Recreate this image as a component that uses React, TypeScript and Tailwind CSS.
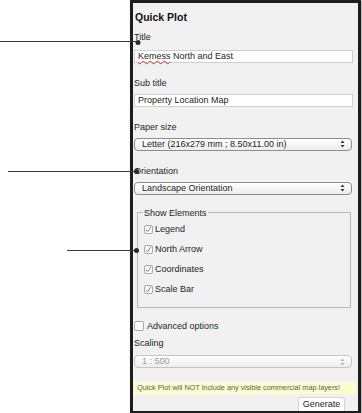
import React from "react";

const font = { fontFamily: '"Liberation Sans", Arial, sans-serif' };

const Check = ({ checked }: { checked: boolean }) => (
  <span className="flex h-[9px] w-[9px] items-center justify-center rounded-[2px] border border-[#a9a9a9] bg-white shadow-[inset_0_1px_1px_rgba(0,0,0,0.08)]">
    {checked && (
      <svg width="7" height="7" viewBox="0 0 7 7">
        <path d="M1 3.8 L2.6 5.6 L6 1" fill="none" stroke="#6b6b6b" strokeWidth="0.9" />
      </svg>
    )}
  </span>
);

const Arrows = ({ muted }: { muted?: boolean }) => (
  <svg width="5" height="8" viewBox="0 0 5 8" className="mr-[6px]">
    <path d="M2.5 0.5 L4.5 3 H0.5 Z M2.5 7.5 L4.5 5 H0.5 Z" fill={muted ? "#b0b0b0" : "#333"} />
  </svg>
);

const Select = ({ value, disabled }: { value: string; disabled?: boolean }) => (
  <div
    className={`flex h-[13px] items-center justify-between rounded-[4px] border bg-gradient-to-b from-white to-[#ededed] pl-[7px] text-[9px] leading-none mr-[4px] ${
      disabled ? "border-[#c4c4c4] text-[#9a9a9a]" : "border-[#8d8d8d] text-[#1e1e1e]"
    }`}
  >
    <span>{value}</span>
    <Arrows muted={disabled} />
  </div>
);

const Label = ({ children, mt }: { children: React.ReactNode; mt: string }) => (
  <div className={`${mt} h-[10px] text-[9px] leading-[10px] text-[#1e1e1e]`}>{children}</div>
);

const items = ["Legend", "North Arrow", "Coordinates", "Scale Bar"];

export default function App() {
  return (
    <div className="relative h-[413px] w-[362px] overflow-hidden bg-white" style={font}>
      <div className="ml-[130px] flex h-[413px] w-[231px] flex-col border-x-[3px] border-t-[3px] border-b-[2px] border-[#1d1d1d] bg-[#f1f1f1] pl-[1px] pr-[2px] shadow-[1px_1px_2px_rgba(0,0,0,0.4)]">
        <div className="mt-[8px] h-[12px] pl-[1px] text-[10.5px] font-bold leading-[12px] text-[#111]">Quick Plot</div>

        <Label mt="mt-[9px]">Title</Label>
        <div className="mt-[8px] mr-[3px] flex h-[13px] items-center border border-[#cfcfcf] bg-white pl-[3px] text-[9px] leading-none text-[#1e1e1e]">
          <span className="underline decoration-wavy decoration-[#d43a3a] decoration-[0.5px] underline-offset-[1px]">Kemess</span>
          <span>&nbsp;North and East</span>
        </div>

        <Label mt="mt-[15px]">Sub title</Label>
        <div className="mt-[6px] mr-[3px] flex h-[13px] items-center border border-[#cfcfcf] bg-white pl-[3px] text-[9px] leading-none text-[#1e1e1e]">
          Property Location Map
        </div>

        <Label mt="mt-[15px]">Paper size</Label>
        <div className="mt-[6px]">
          <Select value="Letter (216x279 mm ; 8.50x11.00 in)" />
        </div>

        <Label mt="mt-[15px]">Orientation</Label>
        <div className="mt-[6px]">
          <Select value="Landscape Orientation" />
        </div>

        <fieldset className="mt-[13px] ml-[3px] mr-[5px] h-[102px] border border-[#b9b9b9] pl-[6px]">
          <legend className="ml-[-1px] px-[1px] text-[9px] leading-[10px] text-[#1e1e1e]">Show Elements</legend>
          <div className="mt-[7px] flex flex-col gap-[10px]">
            {items.map((t) => (
              <div key={t} className="flex h-[10px] items-center gap-[2px] text-[9px] leading-none text-[#1e1e1e]">
                <Check checked />
                <span>{t}</span>
              </div>
            ))}
          </div>
        </fieldset>

        <div className="mt-[13px] flex h-[12px] items-center gap-[3px] text-[9px] leading-none text-[#1e1e1e]">
          <span className="h-[10px] w-[10px] rounded-[2px] border border-[#a9a9a9] bg-white" />
          <span>Advanced options</span>
        </div>

        <Label mt="mt-[6px]">Scaling</Label>
        <div className="mt-[7px]">
          <Select value="1 : 500" disabled />
        </div>

        <div className="mt-[14px] flex h-[12px] items-center whitespace-nowrap bg-[#fdfccf] pl-[3px] text-[7.3px] leading-none text-[#5c5c58]">
          Quick Plot will NOT include any visible commercial map layers!
        </div>

        <div className="mt-[3px] flex justify-end pr-[11px]">
          <button className="h-[14px] w-[47px] rounded-t-[3px] border border-b-0 border-[#d4d4d4] bg-white text-[9px] leading-none text-[#1e1e1e]">
            Generate
          </button>
        </div>
      </div>

      <svg className="pointer-events-none absolute left-0 top-0" width="362" height="413">
        <g stroke="#3a3a3a" strokeWidth="1" fill="#2a2a2a">
          <line x1="0" y1="41.5" x2="137" y2="41.5" />
          <circle cx="138" cy="42.5" r="2.5" stroke="none" />
          <line x1="8" y1="171.5" x2="136" y2="171.5" />
          <circle cx="136.5" cy="171.5" r="2.5" stroke="none" />
          <line x1="67" y1="250.5" x2="136" y2="250.5" />
          <circle cx="136.5" cy="250.5" r="2.5" stroke="none" />
        </g>
      </svg>
    </div>
  );
}
